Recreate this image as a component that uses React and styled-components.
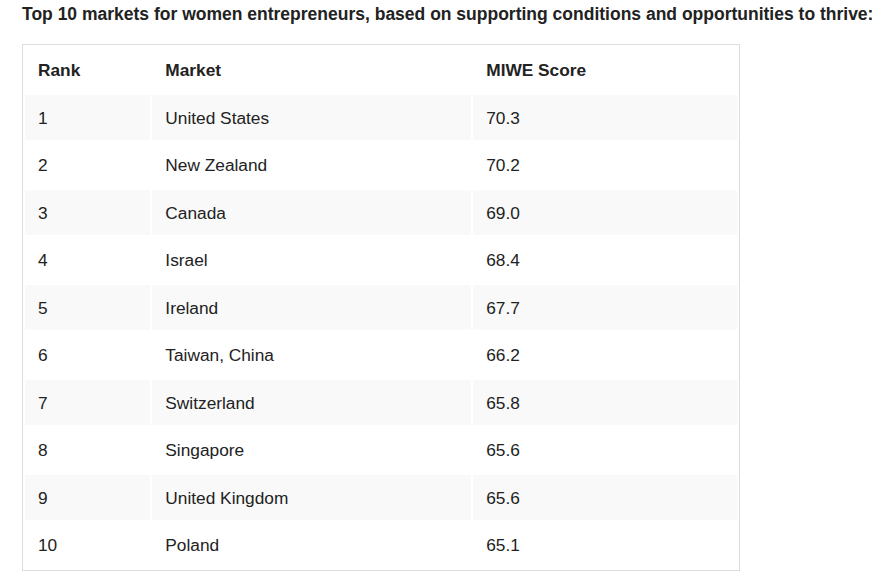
import React from "react";
import styled, { createGlobalStyle } from "styled-components";

const GlobalStyle = createGlobalStyle`
  html, body {
    margin: 0;
    padding: 0;
    background: #ffffff;
  }
  body {
    font-family: "Liberation Sans", Arial, sans-serif;
    color: #222222;
  }
`;

const Page = styled.div`
  padding: 5px 22px 0 22px;
`;

const Heading = styled.h3`
  margin: 0 0 20px 0;
  font-size: 17.5px;
  font-weight: 700;
  line-height: 19px;
  white-space: nowrap;
`;

const Frame = styled.div`
  width: 716px;
  border: 1px solid #dddddd;
`;

const Table = styled.table`
  width: 100%;
  border-collapse: separate;
  border-spacing: 2.5px;
  font-size: 17.3px;
`;

const Row = styled.tr`
  background: ${(props) => (props.striped ? "#f9f9f9" : "transparent")};
`;

const HeadCell = styled.th`
  height: 45.5px;
  padding: 1px 0 0 13px;
  text-align: left;
  font-weight: 700;
  width: ${(props) => props.w}px;
  box-sizing: border-box;
`;

const Cell = styled.td`
  height: 45.5px;
  padding: 2px 0 0 13px;
  box-sizing: border-box;
`;

const markets = [
  ["1", "United States", "70.3"],
  ["2", "New Zealand", "70.2"],
  ["3", "Canada", "69.0"],
  ["4", "Israel", "68.4"],
  ["5", "Ireland", "67.7"],
  ["6", "Taiwan, China", "66.2"],
  ["7", "Switzerland", "65.8"],
  ["8", "Singapore", "65.6"],
  ["9", "United Kingdom", "65.6"],
  ["10", "Poland", "65.1"],
];

export default function App() {
  return (
    <Page>
      <GlobalStyle />
      <Heading>
        Top 10 markets for women entrepreneurs, based on supporting conditions
        and opportunities to thrive:
      </Heading>
      <Frame>
        <Table>
          <thead>
            <Row>
              <HeadCell w={125}>Rank</HeadCell>
              <HeadCell w={318}>Market</HeadCell>
              <HeadCell w={263}>MIWE Score</HeadCell>
            </Row>
          </thead>
          <tbody>
            {markets.map((m, i) => (
              <Row key={m[0]} striped={i % 2 === 0}>
                <Cell>{m[0]}</Cell>
                <Cell>{m[1]}</Cell>
                <Cell>{m[2]}</Cell>
              </Row>
            ))}
          </tbody>
        </Table>
      </Frame>
    </Page>
  );
}
